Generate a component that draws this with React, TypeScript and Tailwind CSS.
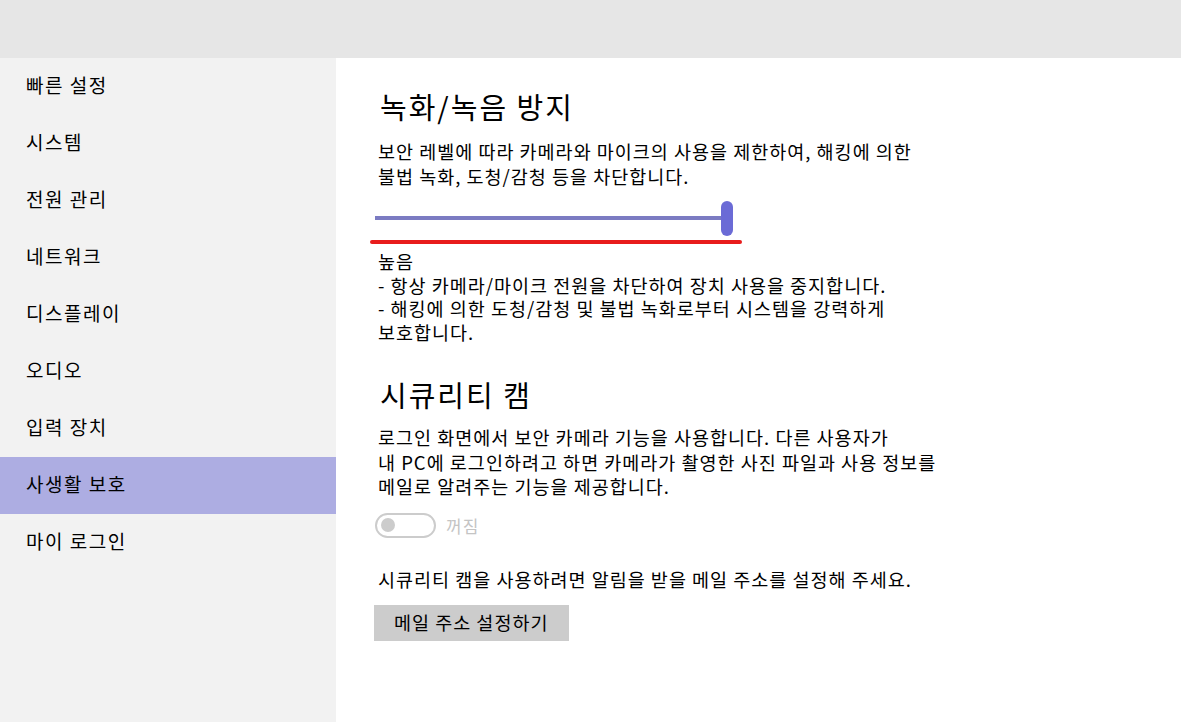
const menuItems = [
  "빠른 설정",
  "시스템",
  "전원 관리",
  "네트워크",
  "디스플레이",
  "오디오",
  "입력 장치",
  "사생활 보호",
  "마이 로그인",
];

const selected = "사생활 보호";

function Sidebar() {
  return (
    <nav className="w-[336px] shrink-0 bg-[#f2f2f2]">
      {menuItems.map((item) => (
        <div
          key={item}
          className={
            item === selected
              ? "flex h-[57px] items-center bg-[#adade2] pb-[3px] pl-[26px] text-[19px] tracking-[1.5px] text-black"
              : "flex h-[57px] items-center pb-[3px] pl-[26px] text-[19px] tracking-[1.5px] text-black"
          }
        >
          {item}
        </div>
      ))}
    </nav>
  );
}

function LevelSlider() {
  return (
    <div className="ml-[-3px] mt-[11px] flex h-[36px] items-center">
      <div className="h-[4px] w-[346px] bg-[#7b7bc2]" />
      <div className="h-[35px] w-[12px] rounded-full bg-[#6b6bd6]" />
    </div>
  );
}

export default function App() {
  return (
    <div className="flex h-[722px] flex-col bg-white font-['Noto_Sans_CJK_KR',sans-serif] text-black">
      <header className="h-[58px] shrink-0 bg-[#e6e6e6]" />
      <div className="flex min-h-0 flex-1">
        <Sidebar />
        <main className="min-w-0 flex-1 pl-[42px] pt-[28px]">
          <h1 className="ml-[2px] text-[29px] leading-[40px] tracking-[2px]">녹화/녹음 방지</h1>
          <p className="mt-[13px] whitespace-nowrap text-[18.5px] leading-[25px] tracking-[1px]">
            보안 레벨에 따라 카메라와 마이크의 사용을 제한하여, 해킹에 의한
            <br />
            불법 녹화, 도청/감청 등을 차단합니다.
          </p>
          <LevelSlider />
          <div className="ml-[-8px] mt-[4px] h-[4px] w-[372px] rounded-full bg-[#e81c1c]" />
          <p className="mt-[6px] whitespace-nowrap text-[18.5px] leading-[23.5px] tracking-[1px]">
            높음
            <br />- 항상 카메라/마이크 전원을 차단하여 장치 사용을 중지합니다.
            <br />- 해킹에 의한 도청/감청 및 불법 녹화로부터 시스템을 강력하게
            <br />
            보호합니다.
          </p>
          <h2 className="ml-[2px] mt-[30px] text-[29px] leading-[40px] tracking-[2px]">시큐리티 캠</h2>
          <p className="mt-[11px] whitespace-nowrap text-[18.5px] leading-[24.5px] tracking-[1px]">
            로그인 화면에서 보안 카메라 기능을 사용합니다. 다른 사용자가
            <br />내 PC에 로그인하려고 하면 카메라가 촬영한 사진 파일과 사용 정보를
            <br />
            메일로 알려주는 기능을 제공합니다.
          </p>
          <div className="ml-[-3px] mt-[14px] flex items-center gap-[10px]">
            <div className="flex h-[25px] w-[61px] items-center rounded-full border-2 border-[#cccccc] pl-[4px]">
              <div className="size-[14px] rounded-full bg-[#cccccc]" />
            </div>
            <span className="text-[17px] leading-[25px] tracking-[1px] text-[#c4c4c4]">꺼짐</span>
          </div>
          <p className="mt-[29px] whitespace-nowrap text-[18.5px] leading-[25px] tracking-[1px]">
            시큐리티 캠을 사용하려면 알림을 받을 메일 주소를 설정해 주세요.
          </p>
          <button
            type="button"
            className="ml-[-4px] mt-[13px] flex h-[36px] w-[195px] items-center bg-[#cccccc] pl-[20px] text-[18.5px] tracking-[1px] text-black"
          >
            메일 주소 설정하기
          </button>
        </main>
      </div>
    </div>
  );
}
